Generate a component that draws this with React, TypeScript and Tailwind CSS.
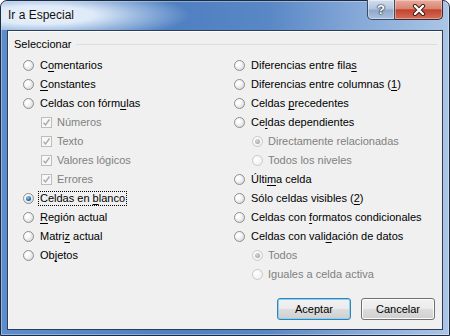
import type { ReactNode } from 'react';

type Item = {
  label: [string, string, string];
  kind: 'radio' | 'check' | 'subradio';
  checked?: boolean;
  disabled?: boolean;
  focus?: boolean;
};

const leftItems: Item[] = [
  { label: ['C', 'o', 'mentarios'], kind: 'radio' },
  { label: ['', 'C', 'onstantes'], kind: 'radio' },
  { label: ['Celdas con fórm', 'u', 'las'], kind: 'radio' },
  { label: ['Números', '', ''], kind: 'check', checked: true, disabled: true },
  { label: ['Texto', '', ''], kind: 'check', checked: true, disabled: true },
  { label: ['Valores lógicos', '', ''], kind: 'check', checked: true, disabled: true },
  { label: ['Errores', '', ''], kind: 'check', checked: true, disabled: true },
  { label: ['Celdas en ', 'b', 'lanco'], kind: 'radio', checked: true, focus: true },
  { label: ['', 'R', 'egión actual'], kind: 'radio' },
  { label: ['Matri', 'z', ' actual'], kind: 'radio' },
  { label: ['Ob', 'j', 'etos'], kind: 'radio' },
];

const rightItems: Item[] = [
  { label: ['Diferencias entre fila', 's', ''], kind: 'radio' },
  { label: ['Diferencias entre columnas (', '1', ')'], kind: 'radio' },
  { label: ['Celdas ', 'p', 'recedentes'], kind: 'radio' },
  { label: ['Ce', 'l', 'das dependientes'], kind: 'radio' },
  { label: ['Directamente relacionadas', '', ''], kind: 'subradio', checked: true, disabled: true },
  { label: ['Todos los niveles', '', ''], kind: 'subradio', disabled: true },
  { label: ['Últi', 'm', 'a celda'], kind: 'radio' },
  { label: ['Sólo celdas visibles (', '2', ')'], kind: 'radio' },
  { label: ['Celdas con ', 'f', 'ormatos condicionales'], kind: 'radio' },
  { label: ['Celdas con vali', 'd', 'ación de datos'], kind: 'radio' },
  { label: ['Todos', '', ''], kind: 'subradio', checked: true, disabled: true },
  { label: ['Iguales a celda activa', '', ''], kind: 'subradio', disabled: true },
];

function Radio({ checked, disabled }: { checked?: boolean; disabled?: boolean }) {
  return (
    <span
      className={`shrink-0 w-[11px] h-[11px] rounded-full border flex items-center justify-center ${
        disabled
          ? 'border-[#c9c9c9] bg-[radial-gradient(circle_at_35%_35%,#ffffff,#ececec)]'
          : 'border-[#8e8f8f] bg-[radial-gradient(circle_at_35%_35%,#ffffff_20%,#cfcfcf)]'
      }`}
    >
      {checked && (
        <span
          className={`w-[5px] h-[5px] rounded-full ${
            disabled
              ? 'bg-[radial-gradient(circle_at_40%_35%,#d8d8d8,#9a9a9a)]'
              : 'bg-[radial-gradient(circle_at_40%_35%,#8fd0f5,#10569f_70%)]'
          }`}
        />
      )}
    </span>
  );
}

function Check() {
  return (
    <span className="shrink-0 w-[11px] h-[11px] border border-[#bdbdbd] bg-[#f7f7f7] flex items-center justify-center">
      <svg width="9" height="9" viewBox="0 0 9 9">
        <path d="M1.5 4.8 L3.5 7 L7.5 1.5" fill="none" stroke="#a8a8a8" strokeWidth="1.3" />
      </svg>
    </span>
  );
}

function Label({ parts }: { parts: [string, string, string] }) {
  return (
    <>
      {parts[0]}
      {parts[1] && <span className="underline decoration-1 underline-offset-[2px]">{parts[1]}</span>}
      {parts[2]}
    </>
  );
}

function Row({ item }: { item: Item }) {
  const text = item.disabled ? 'text-[#808080]' : 'text-black';
  let control: ReactNode;
  let pad = '';
  let gap = 'ml-[6px]';
  if (item.kind === 'check') {
    control = <Check />;
    pad = 'pl-[18px]';
    gap = 'ml-[5px]';
  } else if (item.kind === 'subradio') {
    control = <Radio checked={item.checked} disabled={item.disabled} />;
    pad = 'pl-[18px]';
    gap = 'ml-[5px]';
  } else {
    control = <Radio checked={item.checked} disabled={item.disabled} />;
  }
  return (
    <div className={`flex items-center h-[19px] ${pad}`}>
      {control}
      {item.focus ? (
        <span className={`ml-[4px] px-[1px] border border-dotted border-black leading-[13px] ${text}`}>
          <Label parts={item.label} />
        </span>
      ) : (
        <span className={`${gap} whitespace-nowrap ${text}`}>
          <Label parts={item.label} />
        </span>
      )}
    </div>
  );
}

export default function App() {
  return (
    <div className="w-[450px] h-[336px] bg-white text-[11px] leading-[19px] [font-family:'Liberation_Sans',Arial,sans-serif]">
      <div className="h-full rounded-t-[7px] border border-[#1d2b40] flex flex-col px-[6px] pb-[5px] bg-[linear-gradient(90deg,#5d8dcc_0%,#4f80c2_40%,#5a88c6_60%,#86a9d8_80%,#abc5e6_100%)] shadow-[inset_0_0_0_1px_rgba(255,255,255,0.35)]">
        {/* Title bar */}
        <div className="flex items-start h-[29px] -mx-[6px] px-[6px] rounded-t-[6px] bg-[radial-gradient(ellipse_150px_26px_at_40px_14px,rgba(228,238,250,0.97)_35%,rgba(200,218,240,0.6)_65%,rgba(200,218,240,0)_100%)]">
          <span className="pl-[1px] pt-[7px] text-[12px] leading-[15px] text-[#101010] [text-shadow:0_0_6px_#ffffff,0_0_10px_#ffffff]">
            Ir a Especial
          </span>
          <div className="ml-auto -mt-px flex">
            <div className="w-[28px] h-[20px] border border-t-0 border-[#3a4a62] rounded-bl-[5px] flex items-center justify-center bg-[linear-gradient(#d2deee_0%,#b1c4dd_48%,#91a9c8_52%,#a9c0de_100%)] shadow-[inset_0_0_0_1px_rgba(255,255,255,0.4)]">
              <span className="text-[13px] leading-[14px] font-bold text-white [text-shadow:0_0_1px_#1e2a3c,0_0_1px_#1e2a3c,0_0_2px_#1e2a3c]">
                ?
              </span>
            </div>
            <div className="w-[48px] h-[20px] border border-t-0 border-l-0 border-[#3a2a2a] rounded-br-[5px] flex items-center justify-center bg-[linear-gradient(#e9ab9b_0%,#d98573_45%,#c2432d_52%,#d46e58_100%)] shadow-[inset_0_0_0_1px_rgba(255,255,255,0.35)]">
              <svg width="14" height="12" viewBox="0 0 14 12">
                <path d="M3 2 L11 10 M11 2 L3 10" stroke="#3b1a14" strokeWidth="4.2" strokeLinecap="round" />
                <path d="M3 2 L11 10 M11 2 L3 10" stroke="#ffffff" strokeWidth="2.4" strokeLinecap="round" />
              </svg>
            </div>
          </div>
        </div>

        {/* Client area */}
        <div className="flex-1 flex flex-col border border-[#2c3e57] bg-[#f0f0f0] shadow-[inset_1px_1px_0_#fcfcfc]">
          <div className="flex items-center mt-[6px] h-[15px] pl-[6px] pr-[5px]">
            <span className="leading-[15px] text-black">Seleccionar</span>
            <div className="flex-1 h-px ml-[5px] bg-[#d5dfe5]" />
          </div>

          <div className="flex mt-[4px]">
            <div className="w-[226px] pl-[15px]">
              {leftItems.map((it, i) => (
                <Row key={i} item={it} />
              ))}
            </div>
            <div className="flex-1">
              {rightItems.map((it, i) => (
                <Row key={i} item={it} />
              ))}
            </div>
          </div>

          <div className="flex justify-end gap-[10px] mt-[14px] pr-[7px]">
            <button className="w-[74px] h-[22px] rounded-[3px] border border-[#3c7fb1] shadow-[inset_0_0_0_1px_#7fd6f6] bg-[linear-gradient(#f2f2f2_0%,#ebebeb_50%,#dddddd_50%,#cfcfcf_100%)] text-black leading-[20px]">
              Aceptar
            </button>
            <button className="w-[74px] h-[22px] rounded-[3px] border border-[#707070] shadow-[inset_0_0_0_1px_#fcfcfc] bg-[linear-gradient(#f2f2f2_0%,#ebebeb_50%,#dddddd_50%,#cfcfcf_100%)] text-black leading-[20px]">
              Cancelar
            </button>
          </div>
        </div>
      </div>
    </div>
  );
}
